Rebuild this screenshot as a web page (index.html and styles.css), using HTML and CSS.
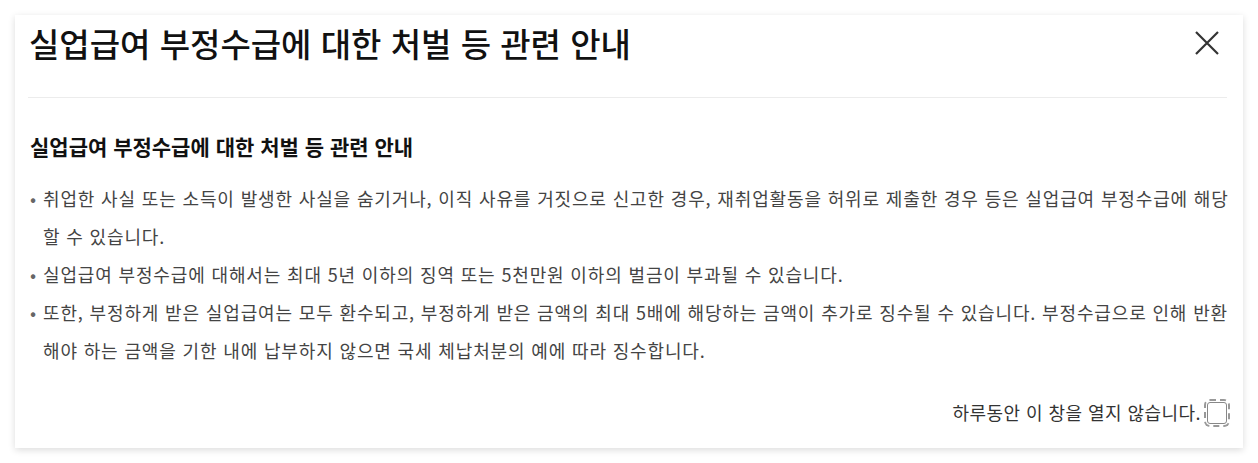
FILE: index.html
```html
<!DOCTYPE html>
<html lang="ko">
<head>
    <meta charset="utf-8">
    <title>실업급여 부정수급 안내</title>
    <meta name="viewport" content="width=device-width, initial-scale=1.0">
    <link rel="stylesheet" href="styles.css">
</head>
<body>

<div class="popup">
    <div class="popup-head">
        <h1>실업급여 부정수급에 대한 처벌 등 관련 안내</h1>
        <button type="button" class="close-button" aria-label="닫기">
            <svg width="26" height="26" viewBox="0 0 26 26">
                <path d="M2 2 L24 24 M24 2 L2 24" stroke="#333" stroke-width="2.2" fill="none"/>
            </svg>
        </button>
    </div>

    <div class="popup-body">
        <h2>실업급여 부정수급에 대한 처벌 등 관련 안내</h2>
        <ul class="notice-list">
            <li>취업한 사실 또는 소득이 발생한 사실을 숨기거나, 이직 사유를 거짓으로 신고한 경우, 재취업활동을 허위로 제출한 경우 등은 실업급여 부정수급에 해당할 수 있습니다.</li>
            <li>실업급여 부정수급에 대해서는 최대 5년 이하의 징역 또는 5천만원 이하의 벌금이 부과될 수 있습니다.</li>
            <li>또한, 부정하게 받은 실업급여는 모두 환수되고, 부정하게 받은 금액의 최대 5배에 해당하는 금액이 추가로 징수될 수 있습니다. 부정수급으로 인해 반환해야 하는 금액을 기한 내에 납부하지 않으면 국세 체납처분의 예에 따라 징수합니다.</li>
        </ul>
    </div>

    <div class="popup-foot">
        <label for="todayClose">하루동안 이 창을 열지 않습니다.</label>
        <input type="checkbox" id="todayClose" class="today-check">
    </div>
</div>

</body>
</html>
```

FILE: styles.css
```css
body {
    margin: 0;
    background-color: #fff;
    font-family: "Noto Sans CJK KR", "Noto Sans", sans-serif;
    color: #444;
}
.popup {
    margin: 15px;
    height: 433px;
    box-sizing: border-box;
    background: #fff;
    box-shadow: 0 2px 7px rgba(0, 0, 0, 0.14);
}
.popup-head {
    display: flex;
    justify-content: space-between;
    align-items: flex-start;
    height: 83px;
    margin: 0 16px 0 13px;
    padding: 7px 0 0 1px;
    box-sizing: border-box;
    border-bottom: 1px solid #ececec;
}
h1 {
    margin: 0;
    font-size: 33px;
    line-height: 42px;
    font-weight: 500;
    color: #111;
}
.close-button {
    margin: 8px 7px 0 0;
    padding: 0;
    border: none;
    background: none;
    cursor: pointer;
}
.close-button svg {
    display: block;
}
.popup-body {
    padding: 0 3px 0 15px;
}
h2 {
    margin: 34px 0 0;
    font-size: 21px;
    line-height: 28px;
    font-weight: 700;
    color: #111;
}
.notice-list {
    margin: 19px 0 0;
    padding: 0;
    list-style: none;
}
.notice-list li {
    display: flex;
    font-size: 18px;
    line-height: 38px;
    letter-spacing: 0.85px;
    word-break: break-all;
}
.notice-list li::before {
    content: "•";
    flex: 0 0 13px;
    color: #666;
}
.popup-foot {
    display: flex;
    justify-content: flex-end;
    align-items: center;
    gap: 3px;
    margin-top: 30px;
    padding-right: 13px;
}
.popup-foot label {
    font-size: 18px;
    line-height: 27px;
    letter-spacing: 0.45px;
    color: #333;
}
.today-check {
    appearance: none;
    -webkit-appearance: none;
    width: 20px;
    height: 22px;
    margin: 0 3px;
    border: 1.5px solid #888;
    border-radius: 3px;
    outline: 2px dashed #999;
    outline-offset: 1px;
    background: #fff;
}
```
